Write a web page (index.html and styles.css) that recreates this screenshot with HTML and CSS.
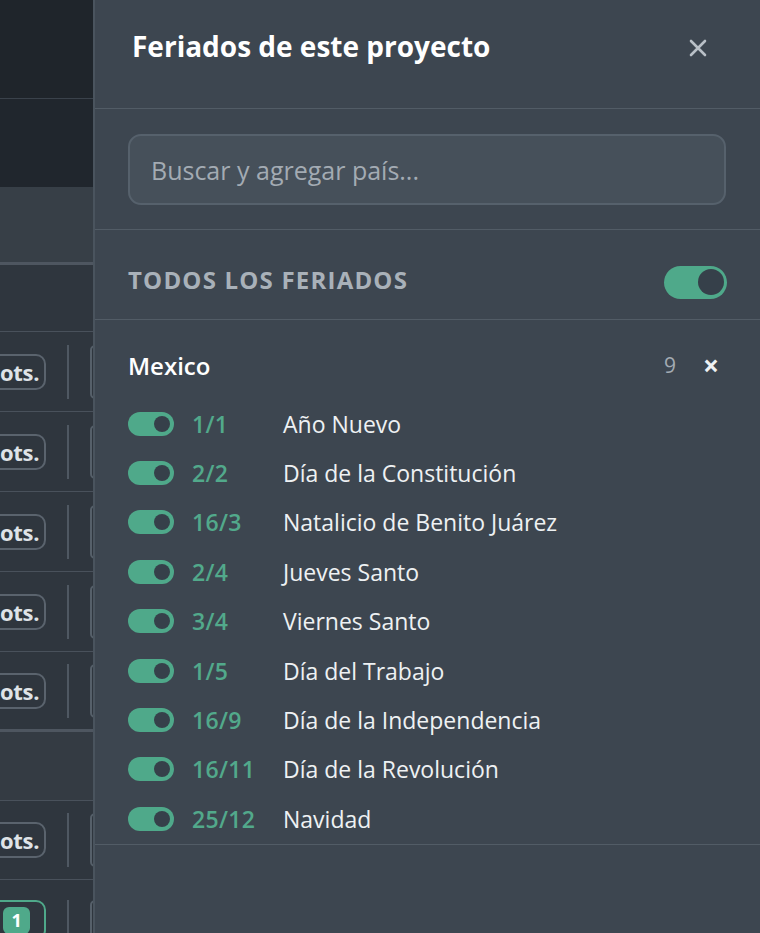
FILE: index.html
```html
<!DOCTYPE html>
<html>
  <head>
    <link rel="stylesheet" href="styles.css">
  </head>
  <body>
    <div class="board">
      <div class="board-top"></div>
      <div class="board-sub"></div>
      <div class="board-head"></div>
      <div class="board-row empty"></div>
      <div class="board-row"><span class="pill">ots.</span><span class="sep"></span><span class="next"></span></div>
      <div class="board-row"><span class="pill">ots.</span><span class="sep"></span><span class="next"></span></div>
      <div class="board-row"><span class="pill">ots.</span><span class="sep"></span><span class="next"></span></div>
      <div class="board-row"><span class="pill">ots.</span><span class="sep"></span><span class="next"></span></div>
      <div class="board-row last"><span class="pill">ots.</span><span class="sep"></span><span class="next"></span></div>
      <div class="board-gap"></div>
      <div class="board-row short"><span class="pill">ots.</span><span class="sep"></span><span class="next"></span></div>
      <div class="board-row top"><span class="pill green"><span class="badge">1</span></span><span class="sep"></span><span class="next"></span></div>
    </div>

    <div class="panel">
      <div class="panel-header">
        <h2>Feriados de este proyecto</h2>
        <button class="close" aria-label="Cerrar">
          <svg width="18" height="18" viewBox="0 0 18 18"><path d="M2 2L16 16M16 2L2 16" stroke="#b9c0c7" stroke-width="2.6" stroke-linecap="round"/></svg>
        </button>
      </div>

      <div class="search">
        <input type="text" placeholder="Buscar y agregar país...">
      </div>

      <div class="all">
        <span class="all-label">TODOS LOS FERIADOS</span>
        <span class="toggle big"></span>
      </div>

      <div class="country">
        <div class="country-head">
          <span class="country-name">Mexico</span>
          <span class="count">9</span>
          <span class="remove">×</span>
        </div>
        <ul class="holidays">
          <li><span class="toggle"></span><span class="date">1/1</span><span class="name">Año Nuevo</span></li>
          <li><span class="toggle"></span><span class="date">2/2</span><span class="name">Día de la Constitución</span></li>
          <li><span class="toggle"></span><span class="date">16/3</span><span class="name">Natalicio de Benito Juárez</span></li>
          <li><span class="toggle"></span><span class="date">2/4</span><span class="name">Jueves Santo</span></li>
          <li><span class="toggle"></span><span class="date">3/4</span><span class="name">Viernes Santo</span></li>
          <li><span class="toggle"></span><span class="date">1/5</span><span class="name">Día del Trabajo</span></li>
          <li><span class="toggle"></span><span class="date">16/9</span><span class="name">Día de la Independencia</span></li>
          <li><span class="toggle"></span><span class="date">16/11</span><span class="name">Día de la Revolución</span></li>
          <li><span class="toggle"></span><span class="date">25/12</span><span class="name">Navidad</span></li>
        </ul>
      </div>
    </div>
  </body>
</html>
```

FILE: styles.css
```css
* {
  box-sizing: border-box;
}

html, body {
  height: 100%;
}

body {
  margin: 0;
  display: flex;
  overflow: hidden;
  font-family: "Open Sans", "Noto Sans", sans-serif;
  background: #3d4650;
  color: #eef1f3;
}

/* board behind the panel */
.board {
  width: 93px;
  flex-shrink: 0;
  overflow: hidden;
  background: #333a42;
}

.board-top {
  height: 99px;
  background: #1f252b;
  border-bottom: 1px solid #3a424b;
}

.board-sub {
  height: 88px;
  background: #20262d;
}

.board-head {
  height: 78px;
  background: #373f47;
  border-bottom: 3px solid #4e5660;
}

.board-row {
  height: 80px;
  display: flex;
  align-items: center;
  border-bottom: 1px solid #49515b;
  background: #2f363e;
}

.board-row.empty {
  height: 67px;
}

.board-row.last {
  border-bottom: 3px solid #4e5660;
}

.board-row.short {
  height: 79px;
}

.board-row.top {
  align-items: flex-start;
  padding-top: 20px;
  border-bottom: 0;
}

.board-gap {
  height: 69px;
  background: #343b43;
  border-bottom: 1px solid #49515b;
}

.pill {
  flex-shrink: 0;
  margin-left: -20px;
  width: 66px;
  height: 36px;
  padding-left: 18px;
  border: 2px solid #5a636d;
  border-radius: 10px;
  display: flex;
  align-items: center;
  font-weight: 700;
  font-size: 22px;
  letter-spacing: -0.3px;
  color: #dfe3e7;
}

.pill.green {
  height: 40px;
  border-color: #4fa98a;
  padding-left: 21px;
  align-items: flex-start;
  padding-top: 5px;
}

.badge {
  width: 27px;
  height: 27px;
  border-radius: 6px;
  background: #4fa98a;
  color: #fff;
  font-size: 18px;
  line-height: 27px;
  text-align: center;
}

.sep {
  flex-shrink: 0;
  width: 2px;
  height: 54px;
  margin-left: 21px;
  background: #4f5862;
}

.next {
  flex-shrink: 0;
  width: 10px;
  height: 54px;
  margin-left: 21px;
  border: 2px solid #56606a;
  border-radius: 8px;
}

/* panel */
.panel {
  flex: 1;
  border-left: 2px solid #4a545e;
  background: #3d4650;
  display: flex;
  flex-direction: column;
}

.panel-header {
  height: 109px;
  padding: 27px 34px 0 37px;
  display: flex;
  justify-content: space-between;
  align-items: flex-start;
  border-bottom: 1px solid #525c66;
}

.panel-header h2 {
  margin: 0;
  font-size: 28px;
  line-height: 38px;
  font-weight: 700;
  color: #fff;
}

.close {
  background: none;
  border: 0;
  padding: 0;
  margin: 12px 19px 0 0;
  cursor: pointer;
}

.search {
  padding: 25px 34px 24px 33px;
  border-bottom: 1px solid #525c66;
}

.search input {
  width: 100%;
  height: 71px;
  border: 2px solid #56616c;
  border-radius: 13px;
  background: #46505a;
  padding: 0 21px;
  font-family: inherit;
  font-size: 25px;
  color: #eef1f3;
  outline: none;
}

.search input::placeholder {
  color: #a3abb3;
}

.all {
  height: 90px;
  padding: 0 33px;
  display: flex;
  justify-content: space-between;
  align-items: center;
  border-bottom: 1px solid #525c66;
}

.all-label {
  font-size: 24px;
  font-weight: 700;
  letter-spacing: 1.2px;
  color: #a9b1b9;
  padding-top: 10px;
}

.toggle {
  position: relative;
  display: inline-block;
  width: 46px;
  height: 24px;
  border-radius: 12px;
  background: #4fa98a;
  flex-shrink: 0;
}

.toggle::after {
  content: "";
  position: absolute;
  right: 4px;
  top: 4px;
  width: 16px;
  height: 16px;
  border-radius: 50%;
  background: #36404a;
}

.toggle.big {
  width: 63px;
  height: 33px;
  border-radius: 17px;
  margin-top: 15px;
}

.toggle.big::after {
  width: 26px;
  height: 26px;
  top: 3.5px;
  right: 3px;
}

.country {
  padding: 30px 34px 0 33px;
  border-bottom: 1px solid #525c66;
}

.country-head {
  display: flex;
  align-items: center;
  height: 30px;
}

.country-name {
  flex: 1;
  font-size: 24px;
  font-weight: 600;
  color: #fff;
}

.count {
  font-size: 21px;
  color: #a3abb3;
}

.remove {
  width: 30px;
  margin-left: 20px;
  text-align: center;
  font-size: 28px;
  font-weight: 700;
  color: #eef1f3;
}

.holidays {
  list-style: none;
  margin: 19px 0 0;
  padding: 0;
}

.holidays li {
  height: 49.4px;
  display: flex;
  align-items: center;
}

.date {
  width: 91px;
  margin-left: 18px;
  font-size: 23px;
  font-weight: 600;
  letter-spacing: 0.3px;
  color: #52a98b;
}

.name {
  font-size: 23px;
  font-weight: 500;
  color: #eef1f3;
}
```
